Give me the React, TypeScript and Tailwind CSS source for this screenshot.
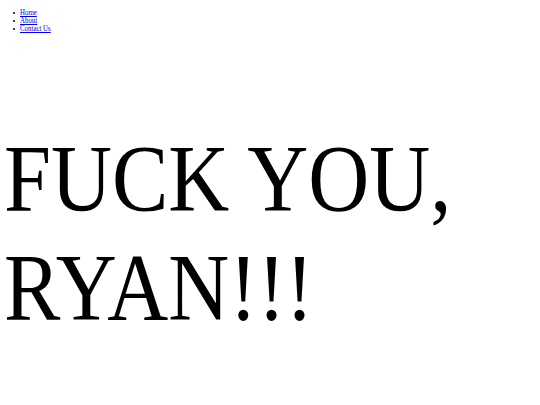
const links = ["Home", "About", "Contact Us"];

export default function App() {
  return (
    <div className="min-h-[405px] bg-white px-1 text-black" style={{ fontFamily: '"Liberation Serif", serif' }}>
      <ul className="flex flex-col pt-[9px] text-[8px] leading-[8px]">
        {links.map((label) => (
          <li key={label} className="flex items-center">
            <span className="ml-[9px] mr-[5px] h-[2px] w-[2px] rounded-full bg-black" />
            <a href="#" className="origin-left scale-x-[0.86] text-[#0000ee] underline">
              {label}
            </a>
          </li>
        ))}
      </ul>
      <h1 className="mt-[91px] origin-left scale-x-[0.88] text-[96px] font-normal leading-[109px]">
        FUCK YOU, RYAN!!!
      </h1>
    </div>
  );
}
